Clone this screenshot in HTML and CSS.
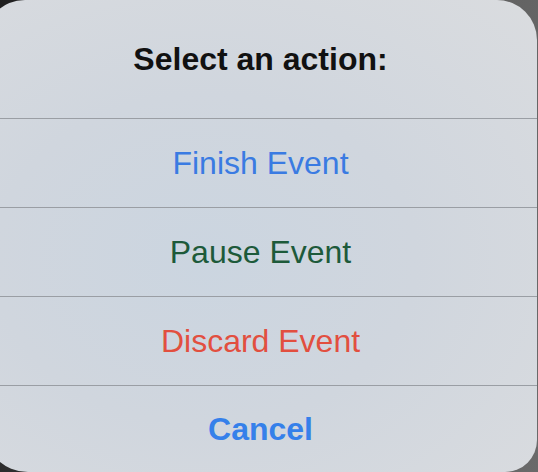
FILE: index.html
```html
<!DOCTYPE html>
<html lang="en">
<head>
    <meta charset="UTF-8">
    <meta name="viewport" content="width=device-width, initial-scale=1.0">
    <title>Select an action</title>
    <link rel="stylesheet" href="styles.css">
</head>
<body>

<div class="sheet">
    <div class="sheet-title">Select an action:</div>
    <button class="sheet-item finish">Finish Event</button>
    <button class="sheet-item pause">Pause Event</button>
    <button class="sheet-item discard">Discard Event</button>
    <button class="sheet-item cancel">Cancel</button>
</div>

</body>
</html>
```

FILE: styles.css
```css
body {
    font-family: "Liberation Sans", Arial, sans-serif;
    margin: 0;
    padding: 0;
    width: 538px;
    height: 472px;
    overflow: hidden;
    background: linear-gradient(100deg, #1f1f1f 0%, #5a5a5a 60%, #6a6a6a 100%);
}

.sheet {
    width: 553px;
    height: 472px;
    margin-left: -16px;
    display: flex;
    flex-direction: column;
    border-radius: 41px 40px 32px 44px;
    overflow: hidden;
    background: radial-gradient(ellipse at 40% 55%, #cbd5e0 0%, #d0d6de 45%, #dadcdf 100%);
}

.sheet-title {
    height: 118px;
    display: flex;
    align-items: center;
    justify-content: center;
    font-size: 32px;
    font-weight: bold;
    color: #111111;
    border-bottom: 1px solid #9a9ea4;
}

.sheet-item {
    height: 89px;
    padding: 0;
    margin: 0;
    border: none;
    border-bottom: 1px solid #9a9ea4;
    background: none;
    font-family: inherit;
    font-size: 32px;
    cursor: pointer;
    flex-shrink: 0;
}

.finish {
    color: #3a7be2;
}

.pause {
    color: #1d5a3a;
}

.discard {
    color: #e24f3f;
}

.cancel {
    flex: 1;
    border-bottom: none;
    font-weight: bold;
    color: #3580ea;
}
```
